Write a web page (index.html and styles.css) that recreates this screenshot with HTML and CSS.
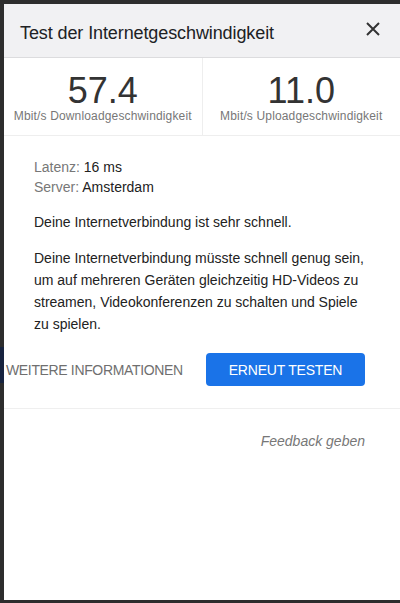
FILE: index.html
```html
<!DOCTYPE html>
<html lang="de">
<head>
<meta charset="utf-8">
<title>Test der Internetgeschwindigkeit</title>
<link rel="stylesheet" href="styles.css">
</head>
<body>
<div class="strip"><div class="strip-block"></div></div>
<div class="panel">
  <header class="header">
    <h1 class="title">Test der Internetgeschwindigkeit</h1>
    <button class="close" aria-label="Schließen">
      <svg width="14" height="14" viewBox="0 0 14 14"><path d="M1 1 L13 13 M13 1 L1 13" stroke="#333" stroke-width="2" fill="none"/></svg>
    </button>
  </header>
  <section class="stats">
    <div class="stat">
      <div class="stat-value">57.4</div>
      <div class="stat-label">Mbit/s Downloadgeschwindigkeit</div>
    </div>
    <div class="stat">
      <div class="stat-value">11.0</div>
      <div class="stat-label">Mbit/s Uploadgeschwindigkeit</div>
    </div>
  </section>
  <section class="content">
    <div class="info">
      <div><span class="info-label">Latenz:</span> 16 ms</div>
      <div><span class="info-label">Server:</span> Amsterdam</div>
    </div>
    <p class="text">Deine Internetverbindung ist sehr schnell.</p>
    <p class="text">Deine Internetverbindung müsste schnell genug sein, um auf mehreren Geräten gleichzeitig HD-Videos zu streamen, Videokonferenzen zu schalten und Spiele zu spielen.</p>
  </section>
  <div class="actions">
    <button class="btn-flat">WEITERE INFORMATIONEN</button>
    <button class="btn-primary">ERNEUT TESTEN</button>
  </div>
  <div class="footer">
    <a class="feedback">Feedback geben</a>
  </div>
</div>
</body>
</html>
```
FILE: styles.css
```css
* { box-sizing: border-box; }
html, body { margin: 0; padding: 0; }
body {
  background: #2d2d2d;
  width: 400px;
  height: 603px;
  display: flex;
  padding: 4px 0 3px 0;
  font-family: "Liberation Sans", Arial, sans-serif;
  overflow: hidden;
}
.strip {
  width: 4px;
  flex: none;
}
.strip-block {
  margin-top: 343px;
  height: 36px;
  background: #17233f;
}
.panel {
  flex: 1;
  background: #fff;
  height: 596px;
  display: flex;
  flex-direction: column;
}
.header {
  height: 54px;
  background: #f1f1f3;
  border-bottom: 1px solid #dcdcde;
  display: flex;
  align-items: center;
  justify-content: space-between;
  padding: 4px 20px 0 16px;
  flex: none;
}
.title {
  margin: 0;
  font-size: 18px;
  font-weight: normal;
  color: #202124;
  line-height: 24px;
  letter-spacing: -0.1px;
}
.close {
  border: 0;
  background: none;
  padding: 0;
  width: 14px;
  height: 14px;
  display: flex;
  margin-top: -7px;
}
.stats {
  display: flex;
  border-bottom: 1px solid #eeeeee;
  flex: none;
}
.stat {
  flex: 1;
  text-align: center;
  padding: 15px 0 12px;
}
.stat + .stat { border-left: 1px solid #eeeeee; }
.stat-value {
  font-size: 36px;
  line-height: 36px;
  color: #333;
}
.stat-label {
  font-size: 12px;
  line-height: 14px;
  color: #777;
  letter-spacing: 0.15px;
}
.content {
  padding: 21px 30px 0 30px;
  font-size: 14px;
  color: #222;
}
.info { line-height: 20px; }
.info-label { color: #777; }
.text {
  margin: 14px 0 0;
  line-height: 22px;
}
.actions {
  display: flex;
  align-items: center;
  justify-content: space-between;
  padding: 18px 35px 22px 2px;
  border-bottom: 1px solid #efefef;
}
.btn-flat {
  border: 0;
  background: none;
  font: inherit;
  font-size: 14px;
  color: #6f6f6f;
  padding: 0;
  letter-spacing: -0.35px;
}
.btn-primary {
  border: 0;
  border-radius: 4px;
  background: #1a73e8;
  color: #fff;
  font: inherit;
  font-size: 14px;
  width: 159px;
  height: 33px;
  padding: 0;
  letter-spacing: -0.2px;
}
.footer {
  padding: 22px 35px 0;
  text-align: right;
  line-height: 20px;
}
.feedback {
  font-size: 14px;
  font-style: italic;
  color: #777;
}
```
